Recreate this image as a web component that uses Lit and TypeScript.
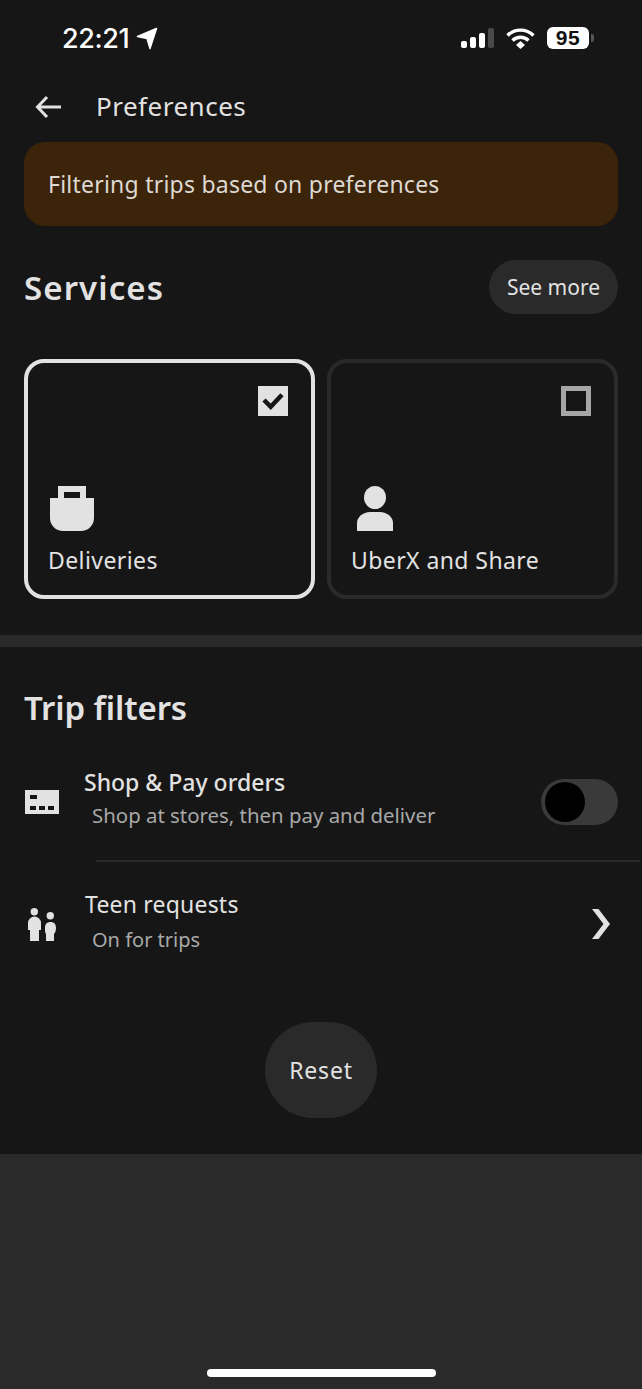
import { LitElement, html, css, svg } from 'lit';
import { customElement } from 'lit/decorators.js';

const bagIcon = svg`<path fill-rule="evenodd" d="M8 0h28v12h8v20a13 13 0 0 1-13 13H13A13 13 0 0 1 0 32V12h8zM14 6v6h16V6z" fill="#e2e2e2"/>`;
const personIcon = svg`<ellipse cx="18" cy="11.500" rx="11" ry="11.500" fill="#e2e2e2"/><path d="M0 45V37C0 31 6 26 13 26h10c7 0 13 5 13 11v8z" fill="#e2e2e2"/>`;

@customElement('app-root')
export class AppRoot extends LitElement {
  static styles = css`
    :host {
      display: flex;
      flex-direction: column;
      width: 642px;
      height: 1389px;
      background: #2a2a2a;
      color: #e2e2e2;
      font-family: "Noto Sans", Roboto, sans-serif;
      overflow: hidden;
    }
    .sheet {
      background: #161616;
      height: 1154px;
      flex: none;
    }
    .status {
      display: flex;
      align-items: center;
      justify-content: space-between;
      height: 38px;
      padding: 19px 48px 0 62px;
    }
    .time {
      display: flex;
      align-items: center;
      gap: 7px;
      font-size: 27px;
      font-weight: 500;
      color: #fff;
      font-family: Inter, sans-serif;
      letter-spacing: -0.4px;
    }
    .status-right { display: flex; align-items: center; gap: 12px; }
    .bars { display: flex; align-items: flex-end; gap: 3px; height: 20px; }
    .bars i { display: block; width: 6px; border-radius: 2px; background: #fff; }
    .bars i.off { background: #4a4a4a; }
    .battery { display: flex; align-items: center; gap: 2px; }
    .battery span {
      display: flex;
      align-items: center;
      justify-content: center;
      width: 42px;
      height: 22px;
      border-radius: 6px;
      background: #fff;
      color: #111;
      font: 700 21px "Liberation Sans", sans-serif;
      letter-spacing: 0.5px;
    }
    .battery b { display: block; width: 3px; height: 8px; border-radius: 0 2px 2px 0; background: #555; }
    .nav {
      display: flex;
      align-items: center;
      gap: 35px;
      height: 46px;
      padding: 27px 0 0 35px;
      margin-bottom: 12px;
    }
    .nav span { font-size: 26px; color: #e2e2e2; letter-spacing: 0.5px; margin-top: -2px; }
    .banner {
      display: flex;
      align-items: center;
      height: 84px;
      margin: 0 24px;
      padding: 0 24px;
      border-radius: 21px;
      background: #3b2409;
      font-size: 23px;
      letter-spacing: 0.23px;
      color: #ddd8d2;
    }
    .services-head {
      display: flex;
      align-items: center;
      justify-content: space-between;
      margin: 34px 24px 45px;
    }
    h2 { margin: 0; font-size: 33px; font-weight: 600; color: #e2e2e2; letter-spacing: 1.100px; }
    .more {
      height: 54px;
      padding: 0 18px;
      display: flex;
      align-items: center;
      border-radius: 27px;
      background: #2a2a2a;
      font-size: 21px;
    }
    .cards {
      display: grid;
      grid-template-columns: 291px 291px;
      gap: 12px;
      padding: 0 24px;
    }
    .card {
      position: relative;
      box-sizing: border-box;
      height: 240px;
      border: 4px solid #2a2a2a;
      border-radius: 20px;
      padding: 123px 0 0 20px;
    }
    .card.on { border-color: #e2e2e2; }
    .card svg.glyph { display: block; height: 45px; }
    .card svg.bag { margin-left: 2px; }
    .card svg.person { margin-left: 6px; }
    .card p { margin: 13px 0 0; font-size: 23px; color: #e2e2e2; letter-spacing: 0.42px; }
    .check {
      position: absolute;
      top: 23px;
      right: 23px;
      box-sizing: border-box;
      width: 30px;
      height: 30px;
    }
    .check.on { background: #e2e2e2; }
    .check.off { border: 5px solid #a6a6a6; }
    .rule { height: 12px; margin-top: 36px; background: #2a2a2a; }
    .trip-title { margin: 38px 24px 0; letter-spacing: -0.1px; }
    .row { display: flex; align-items: center; }
    .row svg.lead { flex: none; margin-left: 25px; }
    .row.shop { margin-top: 42px; height: 60px; }
    .row.teen { margin-top: 29px; height: 66px; }
    .row.teen svg.lead { margin-left: 28px; }
    .text { margin-left: 25px; }
    .shop .text { margin-top: -10px; }
    .teen .text { margin-top: -8px; margin-left: 29px; }
    .text .title { font-size: 23px; color: #e2e2e2; letter-spacing: 0.2px; }
    .shop .title { font-weight: 500; letter-spacing: 0; }
    .text .sub { margin: 6px 0 0 8px; font-size: 20.400px; color: #a8a8a8; }
    .shop .sub { margin-top: 3px; }
    .teen .sub { margin-left: 7px; font-size: 20px; }
    .row .end { margin-left: auto; }
    .toggle {
      position: relative;
      box-sizing: border-box;
      width: 77px;
      height: 46px;
      margin-right: 24px;
      border-radius: 23px;
      background: #3a3a3a;
    }
    .toggle i {
      position: absolute;
      left: 4px;
      top: 3px;
      width: 40px;
      height: 40px;
      border-radius: 50%;
      background: #000;
    }
    .chevron { margin-right: 32px; }
    .hair { height: 2px; margin: 28px 2px 0 96px; background: #2a2a2a; }
    .reset-wrap { display: flex; justify-content: center; margin-top: 65px; }
    .reset {
      display: flex;
      align-items: center;
      justify-content: center;
      width: 112px;
      height: 96px;
      border-radius: 48px;
      background: #2a2a2a;
      font-size: 23px;
      letter-spacing: 0.8px;
    }
    .home-wrap { flex: 1; display: flex; align-items: flex-end; justify-content: center; padding-bottom: 12px; }
    .home { width: 229px; height: 8px; border-radius: 4px; background: #fff; }
  `;

  render() {
    return html`
      <div class="sheet">
        <div class="status">
          <div class="time">
            22:21
            <svg width="22" height="23" viewBox="0 0 22 23"><path d="M20.500 1.500 1.500 9.500l9.500 2 3 10z" fill="#fff" stroke="#fff" stroke-width="1.500" stroke-linejoin="round"/></svg>
          </div>
          <div class="status-right">
            <div class="bars">
              <i style="height:7px"></i><i style="height:11px"></i><i style="height:15px"></i><i class="off" style="height:20px"></i>
            </div>
            <svg width="29" height="21" viewBox="0 0 29 21" fill="none" stroke="#fff" stroke-width="3.400">
              <path d="M1.500 7.500a18.500 18.500 0 0 1 26 0"/><path d="M6.500 12.500a11.500 11.500 0 0 1 16 0"/>
              <path d="M10 17l4.500-4 4.500 4-4.500 4z" fill="#fff" stroke="none"/>
            </svg>
            <div class="battery"><span>95</span><b></b></div>
          </div>
        </div>
        <div class="nav">
          <svg width="26" height="24" viewBox="0 0 26 24" fill="none" stroke="#e2e2e2" stroke-width="3"><path d="M12 2 2.500 12l9.500 10M3 12h23"/></svg>
          <span>Preferences</span>
        </div>
        <div class="banner">Filtering trips based on preferences</div>
        <div class="services-head">
          <h2>Services</h2>
          <div class="more">See more</div>
        </div>
        <div class="cards">
          <div class="card on">
            <div class="check on">
              <svg width="30" height="30" viewBox="0 0 30 30" fill="none" stroke="#161616" stroke-width="4.500"><path d="M6 14l6.700 6.700L24 8.700"/></svg>
            </div>
            <svg class="glyph bag" width="44" height="45" viewBox="0 0 44 45">${bagIcon}</svg>
            <p>Deliveries</p>
          </div>
          <div class="card">
            <div class="check off"></div>
            <svg class="glyph person" width="36" height="45" viewBox="0 0 36 45">${personIcon}</svg>
            <p>UberX and Share</p>
          </div>
        </div>
        <div class="rule"></div>
        <h2 class="trip-title">Trip filters</h2>
        <div class="row shop">
          <svg class="lead" width="34" height="24" viewBox="0 0 34 24">
            <path fill="#e2e2e2" d="M0 0h34v24H0z"/>
            <path fill="#161616" d="M5 5h7v4H5zM5 16h6v4H5zM14 16h6v4h-6zM23 16h6v4h-6z"/>
          </svg>
          <div class="text">
            <div class="title">Shop &amp; Pay orders</div>
            <div class="sub">Shop at stores, then pay and deliver</div>
          </div>
          <div class="toggle end"><i></i></div>
        </div>
        <div class="hair"></div>
        <div class="row teen">
          <svg class="lead" width="28" height="33" viewBox="0 0 28 33" fill="#e2e2e2">
            <circle cx="6.300" cy="3.700" r="3.700"/><path d="M0 22v-7a6.500 6.500 0 0 1 13 0v7h-2v11H2V22z"/>
            <circle cx="22.300" cy="7.700" r="3.700"/><path d="M17 20c0-4 2-6 5.500-6s5.500 2 5.500 6c0 3-1 5-2 6v7h-8v-7c-1-1-1-3-1-6z"/>
          </svg>
          <div class="text">
            <div class="title">Teen requests</div>
            <div class="sub">On for trips</div>
          </div>
          <svg class="end chevron" width="18" height="30" viewBox="0 0 18 30" fill="#e2e2e2"><path d="M0 0h6.500L18 15 6.500 30H0l11.500-15z"/></svg>
        </div>
        <div class="reset-wrap"><div class="reset">Reset</div></div>
      </div>
      <div class="home-wrap"><div class="home"></div></div>
    `;
  }
}
